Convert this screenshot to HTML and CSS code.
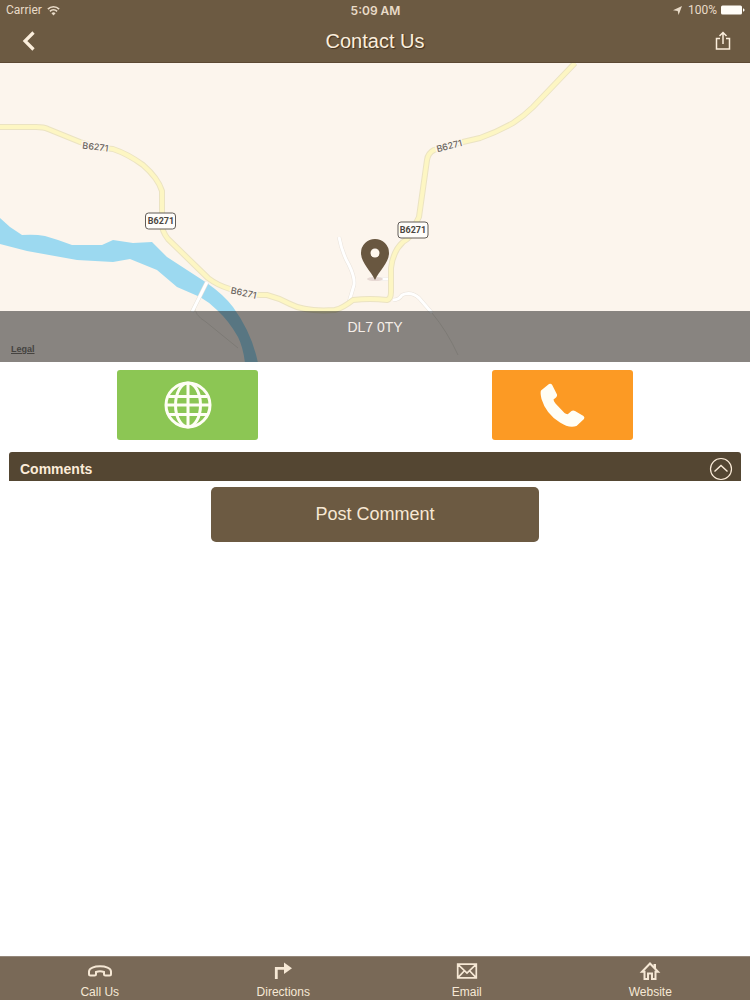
FILE: index.html
```html
<!DOCTYPE html>
<html lang="en">
<head>
<meta charset="utf-8">
<meta name="viewport" content="width=device-width, initial-scale=1">
<title>Contact Us</title>
<link rel="stylesheet" href="styles.css">
</head>
<body>
<div class="app">
  <header class="header">
    <div class="status">
      <div class="status-left">
        <span>Carrier</span>
        <svg class="wifi" viewBox="0 0 12 10" aria-hidden="true"><path d="M.8 3.7a7.4 7.4 0 0 1 10.4 0M2.7 5.8a4.7 4.7 0 0 1 6.6 0" fill="none" stroke="currentColor" stroke-width="1.5"/><path d="M6 9.5 4.1 7.5a2.7 2.7 0 0 1 3.8 0z" fill="currentColor"/></svg>
      </div>
      <div class="status-time">5:09 AM</div>
      <div class="status-right">
        <svg class="arrow" viewBox="0 0 10 10" aria-hidden="true"><path d="M10 0 6.200 10 5.200 5.500 0 4.700z" fill="currentColor"/></svg>
        <span>100%</span>
        <svg class="battery" viewBox="0 0 24 10" aria-hidden="true"><rect x="0" y=".5" width="21" height="9" rx="1.5" fill="currentColor"/><path d="M22 3.2q1.6.5 1.6 1.8T22 6.8z" fill="currentColor"/></svg>
      </div>
    </div>
    <div class="nav">
      <button class="nav-button" type="button" aria-label="Back"><svg class="back-icon" viewBox="0 0 14 20"><path d="M11.5 1.5 3 10l8.500 8.500" fill="none" stroke="currentColor" stroke-width="3.200"/></svg></button>
      <h1 class="title">Contact Us</h1>
      <button class="nav-button nav-share" type="button" aria-label="Share"><svg class="share-icon" viewBox="0 0 16 20"><path d="M5 7.500H1.500V18h13V7.500H11M8 13V2M4.500 5 8 1.500 11.500 5" fill="none" stroke="currentColor" stroke-width="1.500"/></svg></button>
    </div>
  </header>

  <main class="content">
    <section class="map" aria-label="Map">
      <svg class="map-art" viewBox="0 0 750 300" preserveAspectRatio="xMidYMid slice">
        <path class="river" d="M0 155 10 164 22 172Q35 171 45 173L58 177 72 182H102L113 177 133 180 152 179 167 194 207 220Q224 232 233 244 252 270 258 300H245Q243 284 238 274 229 258 217 247 209 239 200 234L177 224 157 207 130 196 113 199 77 197 27 188 0 181z"/>
        <g class="track">
          <path d="M195 243Q194 252 206 259L238 285"/>
          <path d="M432 250Q447 268 458 292"/>
        </g>
        <g class="lane-edge">
          <path d="M207 219 192 249"/>
          <path d="M339 174Q342 190 349 202 355 214 354 222L349 239"/>
          <path d="M393 237Q399 237 402 232 411 228 419 235L432 250M375 216H391"/>
        </g>
        <g class="lane">
          <path d="M207 219 192 249"/>
          <path d="M339 174Q342 190 349 202 355 214 354 222L349 239"/>
          <path d="M393 237Q399 237 402 232 411 228 419 235L432 250M375 216H391"/>
        </g>
        <path class="road-edge" d="M0 64H36Q44 64 48 66L80 79Q97 85 113 86 128 91 143 102 158 115 162 128V154Q160 166 168 176L208 215Q217 222 230 226 243 232 267 232 279 235 290 241 305 249 335 247 343 245 353 237 370 235 387 237 391 236 391 229V205Q393 188 403 179 412 174 413 166L419 154 427 97Q428 90 434 87L450 82 480 75Q497 69 513 60 524 53 533 44L575 0"/>
        <path class="road" d="M0 64H36Q44 64 48 66L80 79Q97 85 113 86 128 91 143 102 158 115 162 128V154Q160 166 168 176L208 215Q217 222 230 226 243 232 267 232 279 235 290 241 305 249 335 247 343 245 353 237 370 235 387 237 391 236 391 229V205Q393 188 403 179 412 174 413 166L419 154 427 97Q428 90 434 87L450 82 480 75Q497 69 513 60 524 53 533 44L575 0"/>
        <g class="road-name">
          <text transform="translate(95 87) rotate(7)">B6271</text>
          <text transform="translate(450 86) rotate(-14)">B6271</text>
          <text transform="translate(243 233) rotate(12)">B6271</text>
        </g>
        <g class="shield">
          <rect x="145.500" y="150" width="30" height="16" rx="3"/>
          <text x="161" y="161">B6271</text>
          <rect x="398" y="159" width="30" height="16" rx="3"/>
          <text x="413" y="170">B6271</text>
        </g>
        <ellipse cx="375" cy="216" rx="8" ry="2" fill="#e6d8d3"/>
        <path d="M375 217C371 208 361 200 361 190a14 14 0 0 1 28 0C389 200 379 208 375 217z" fill="#695740"/>
        <circle cx="375" cy="190" r="4.500" fill="#fff8ee"/>
      </svg>
      <div class="caption">
        <span>DL7 0TY</span>
        <a class="legal" href="#">Legal</a>
      </div>
    </section>

    <div class="actions">
      <a class="action action-web" href="#" aria-label="Open website"><svg class="action-icon" viewBox="0 0 48 48"><g fill="none" stroke="currentColor" stroke-width="3"><circle cx="24" cy="24" r="22"/><ellipse cx="24" cy="24" rx="12.500" ry="22"/><path d="M24 2v44M2 24h44M5 15.500h38M5 33.500h38"/></g></svg></a>
      <a class="action action-call" href="#" aria-label="Call"><svg class="action-icon" viewBox="0 0 48 48"><path d="M2 9.500 10 3Q12 2 13.200 4L18 13.500Q18.500 15 17 16.500L14.500 18.500Q14.500 20 16.500 22.500L25.500 32Q27.500 33.500 29 33L32.500 30Q34 29 36 30L44.500 35Q46 36.500 45 38L37.500 45Q30 47.500 21 41.500 7 33 2.500 18 1 11.500 2 9.500z" fill="currentColor"/></svg></a>
    </div>

    <section class="comments">
      <button class="comments-head" type="button" aria-expanded="true">
        <span>Comments</span>
        <svg class="chevron" viewBox="0 0 24 24" aria-hidden="true"><circle cx="12" cy="12" r="10.500" fill="none" stroke="currentColor" stroke-width="1.200"/><path d="m5.500 14.500 6.500-6 6.500 6" fill="none" stroke="currentColor" stroke-width="1.400"/></svg>
      </button>
      <button class="post" type="button">Post Comment</button>
    </section>
  </main>

  <nav class="tabs">
    <a class="tab" href="#"><svg class="tab-icon" viewBox="0 0 24 20" aria-hidden="true"><path d="M1 10.500C1 3.500 23 3.500 23 10.500V13Q23 14.500 21.500 14.500H17.500Q16 14.500 16 13V11Q12 9.500 8 11V13Q8 14.500 6.500 14.500H2.500Q1 14.500 1 13z" fill="none" stroke="currentColor" stroke-width="2"/></svg><span>Call Us</span></a>
    <a class="tab" href="#"><svg class="tab-icon" viewBox="0 0 24 20" aria-hidden="true"><path d="M5.300 18V7.300H15" fill="none" stroke="currentColor" stroke-width="2.800"/><path d="m13 1.500 8 5.800-8 5.700z" fill="currentColor"/></svg><span>Directions</span></a>
    <a class="tab" href="#"><svg class="tab-icon" viewBox="0 0 24 20" aria-hidden="true"><path d="M2.700 3.200h18.600v13.600H2.700zM2.700 3.200 12 12l9.300-8.800M2.700 16.800 9.200 10M21.300 16.800 14.800 10" fill="none" stroke="currentColor" stroke-width="1.700"/></svg><span>Email</span></a>
    <a class="tab" href="#"><svg class="tab-icon" viewBox="0 0 24 20" aria-hidden="true"><path d="M6.500 10.700H4L12 2.500l8 8.200H17.500V18H14V12.500H10V18H6.500z" fill="none" stroke="currentColor" stroke-width="2"/><path d="M15.500 3h2.500v5l-2.500-2.500z" fill="currentColor"/></svg><span>Website</span></a>
  </nav>
</div>
</body>
</html>
```

FILE: styles.css
```css
* {
  box-sizing: border-box;
}

body {
  margin: 0;
  background: #fff;
  font-family: "Liberation Sans", Arial, sans-serif;
}

button {
  margin: 0;
  padding: 0;
  border: 0;
  background: none;
  color: inherit;
  font: inherit;
  cursor: pointer;
}

a {
  color: inherit;
  text-decoration: none;
}

svg {
  display: block;
}

.app {
  display: flex;
  flex-direction: column;
  min-height: 100vh;
}

.header {
  padding-bottom: 1px;
  border-bottom: 1px solid #5c4934;
  background: #6c5a42;
  color: #fbeedc;
}

.status,
.nav {
  display: grid;
  grid-template-columns: 1fr auto 1fr;
  align-items: center;
}

.status {
  height: 20px;
  padding: 0 5px 0 6px;
  color: #e9dbc8;
  font-family: Roboto, Inter, sans-serif;
  font-size: 12px;
}

.status-left,
.status-right {
  display: flex;
  align-items: center;
  gap: 5px;
}

.status-right {
  justify-content: flex-end;
  gap: 4px;
}

.status-right span {
  margin-left: 2px;
}

.status-time {
  font-family: Inter, Roboto, sans-serif;
  font-weight: 600;
}

.wifi {
  width: 13px;
  height: 11px;
}

.arrow {
  width: 9px;
  height: 9px;
}

.battery {
  width: 24px;
  height: 10px;
  color: #fffdf8;
}

.nav {
  height: 41px;
  padding: 0 18px;
}

.nav-button {
  display: flex;
  align-items: center;
  justify-self: start;
  width: 24px;
  height: 40px;
}

.nav-share {
  justify-content: flex-end;
  justify-self: end;
}

.back-icon {
  width: 22px;
  height: 20px;
}

.share-icon {
  width: 18px;
  height: 20px;
}

.title {
  margin: 0;
  font-size: 20px;
  font-weight: 400;
  line-height: 40px;
  text-shadow: 1px 1px 1px #40301f;
}

.content {
  flex: 1;
}

.map {
  position: relative;
  height: 299px;
  overflow: hidden;
  background: #fcf5ed;
}

.map-art {
  width: 100%;
  height: 300px;
}

.river {
  fill: #9cd9f0;
}

.road,
.road-edge,
.lane,
.lane-edge,
.track {
  fill: none;
  stroke-linejoin: round;
}

.road-edge {
  stroke: #ebe3c2;
  stroke-width: 6px;
}

.road {
  stroke: #fdf6c3;
  stroke-width: 4px;
}

.lane-edge {
  stroke: #e9e2da;
  stroke-width: 4px;
}

.lane {
  stroke: #fff;
  stroke-width: 3px;
}

.track {
  stroke: #e6e0d6;
  stroke-width: 1px;
}

.road-name {
  fill: #6b655f;
  stroke: #fcf5ed;
  stroke-width: 3px;
  paint-order: stroke;
  font: 500 9px Inter, sans-serif;
  text-anchor: middle;
}

.shield rect {
  fill: #fffdfa;
  stroke: #625c57;
  stroke-width: 1px;
}

.shield text {
  fill: #4b4642;
  font: bold 9px Roboto, "Liberation Sans", sans-serif;
  text-anchor: middle;
}

.caption {
  position: absolute;
  right: 0;
  bottom: 0;
  left: 0;
  display: flex;
  flex-direction: column;
  align-items: center;
  justify-content: space-between;
  height: 51px;
  padding: 8px 11px;
  background: rgba(20, 20, 20, 0.5);
  color: #f5eee8;
  font-size: 14px;
  line-height: 16px;
}

.legal {
  align-self: flex-start;
  color: #454340;
  font-size: 9px;
  font-weight: 700;
  line-height: 10px;
  text-decoration: underline;
}

.actions {
  display: grid;
  grid-template-columns: 1fr 1fr;
  justify-items: center;
  padding: 8px 0 12px;
}

.action {
  display: flex;
  align-items: center;
  justify-content: center;
  width: 141px;
  height: 70px;
  border-radius: 3px;
  color: #fffef5;
}

.action-web {
  background: #8cc654;
}

.action-call {
  background: #fc9a24;
}

.action-icon {
  width: 48px;
  height: 48px;
}

.comments {
  display: flex;
  flex-direction: column;
  align-items: center;
  gap: 6px;
  padding: 0 9px;
}

.comments-head {
  display: flex;
  align-items: center;
  justify-content: space-between;
  width: 100%;
  height: 29px;
  padding: 4px 8px 0 11px;
  border-radius: 3px 3px 0 0;
  background: #544632;
  color: #fcecd9;
  font-size: 14px;
  font-weight: 700;
}

.chevron {
  width: 24px;
  height: 24px;
}

.post {
  width: 328px;
  height: 55px;
  border-radius: 5px;
  background: #6c5a42;
  color: #f7e8d4;
  font-size: 18px;
}

.tabs {
  display: grid;
  grid-template-columns: repeat(4, 1fr);
  padding: 4px 8px 1px;
  border-top: 1px solid #94877a;
  background: #796957;
  color: #f6e8d5;
}

.tab {
  display: flex;
  flex-direction: column;
  align-items: center;
  gap: 4px;
  font-size: 12px;
  line-height: 14px;
}

.tab-icon {
  width: 24px;
  height: 20px;
}
```
